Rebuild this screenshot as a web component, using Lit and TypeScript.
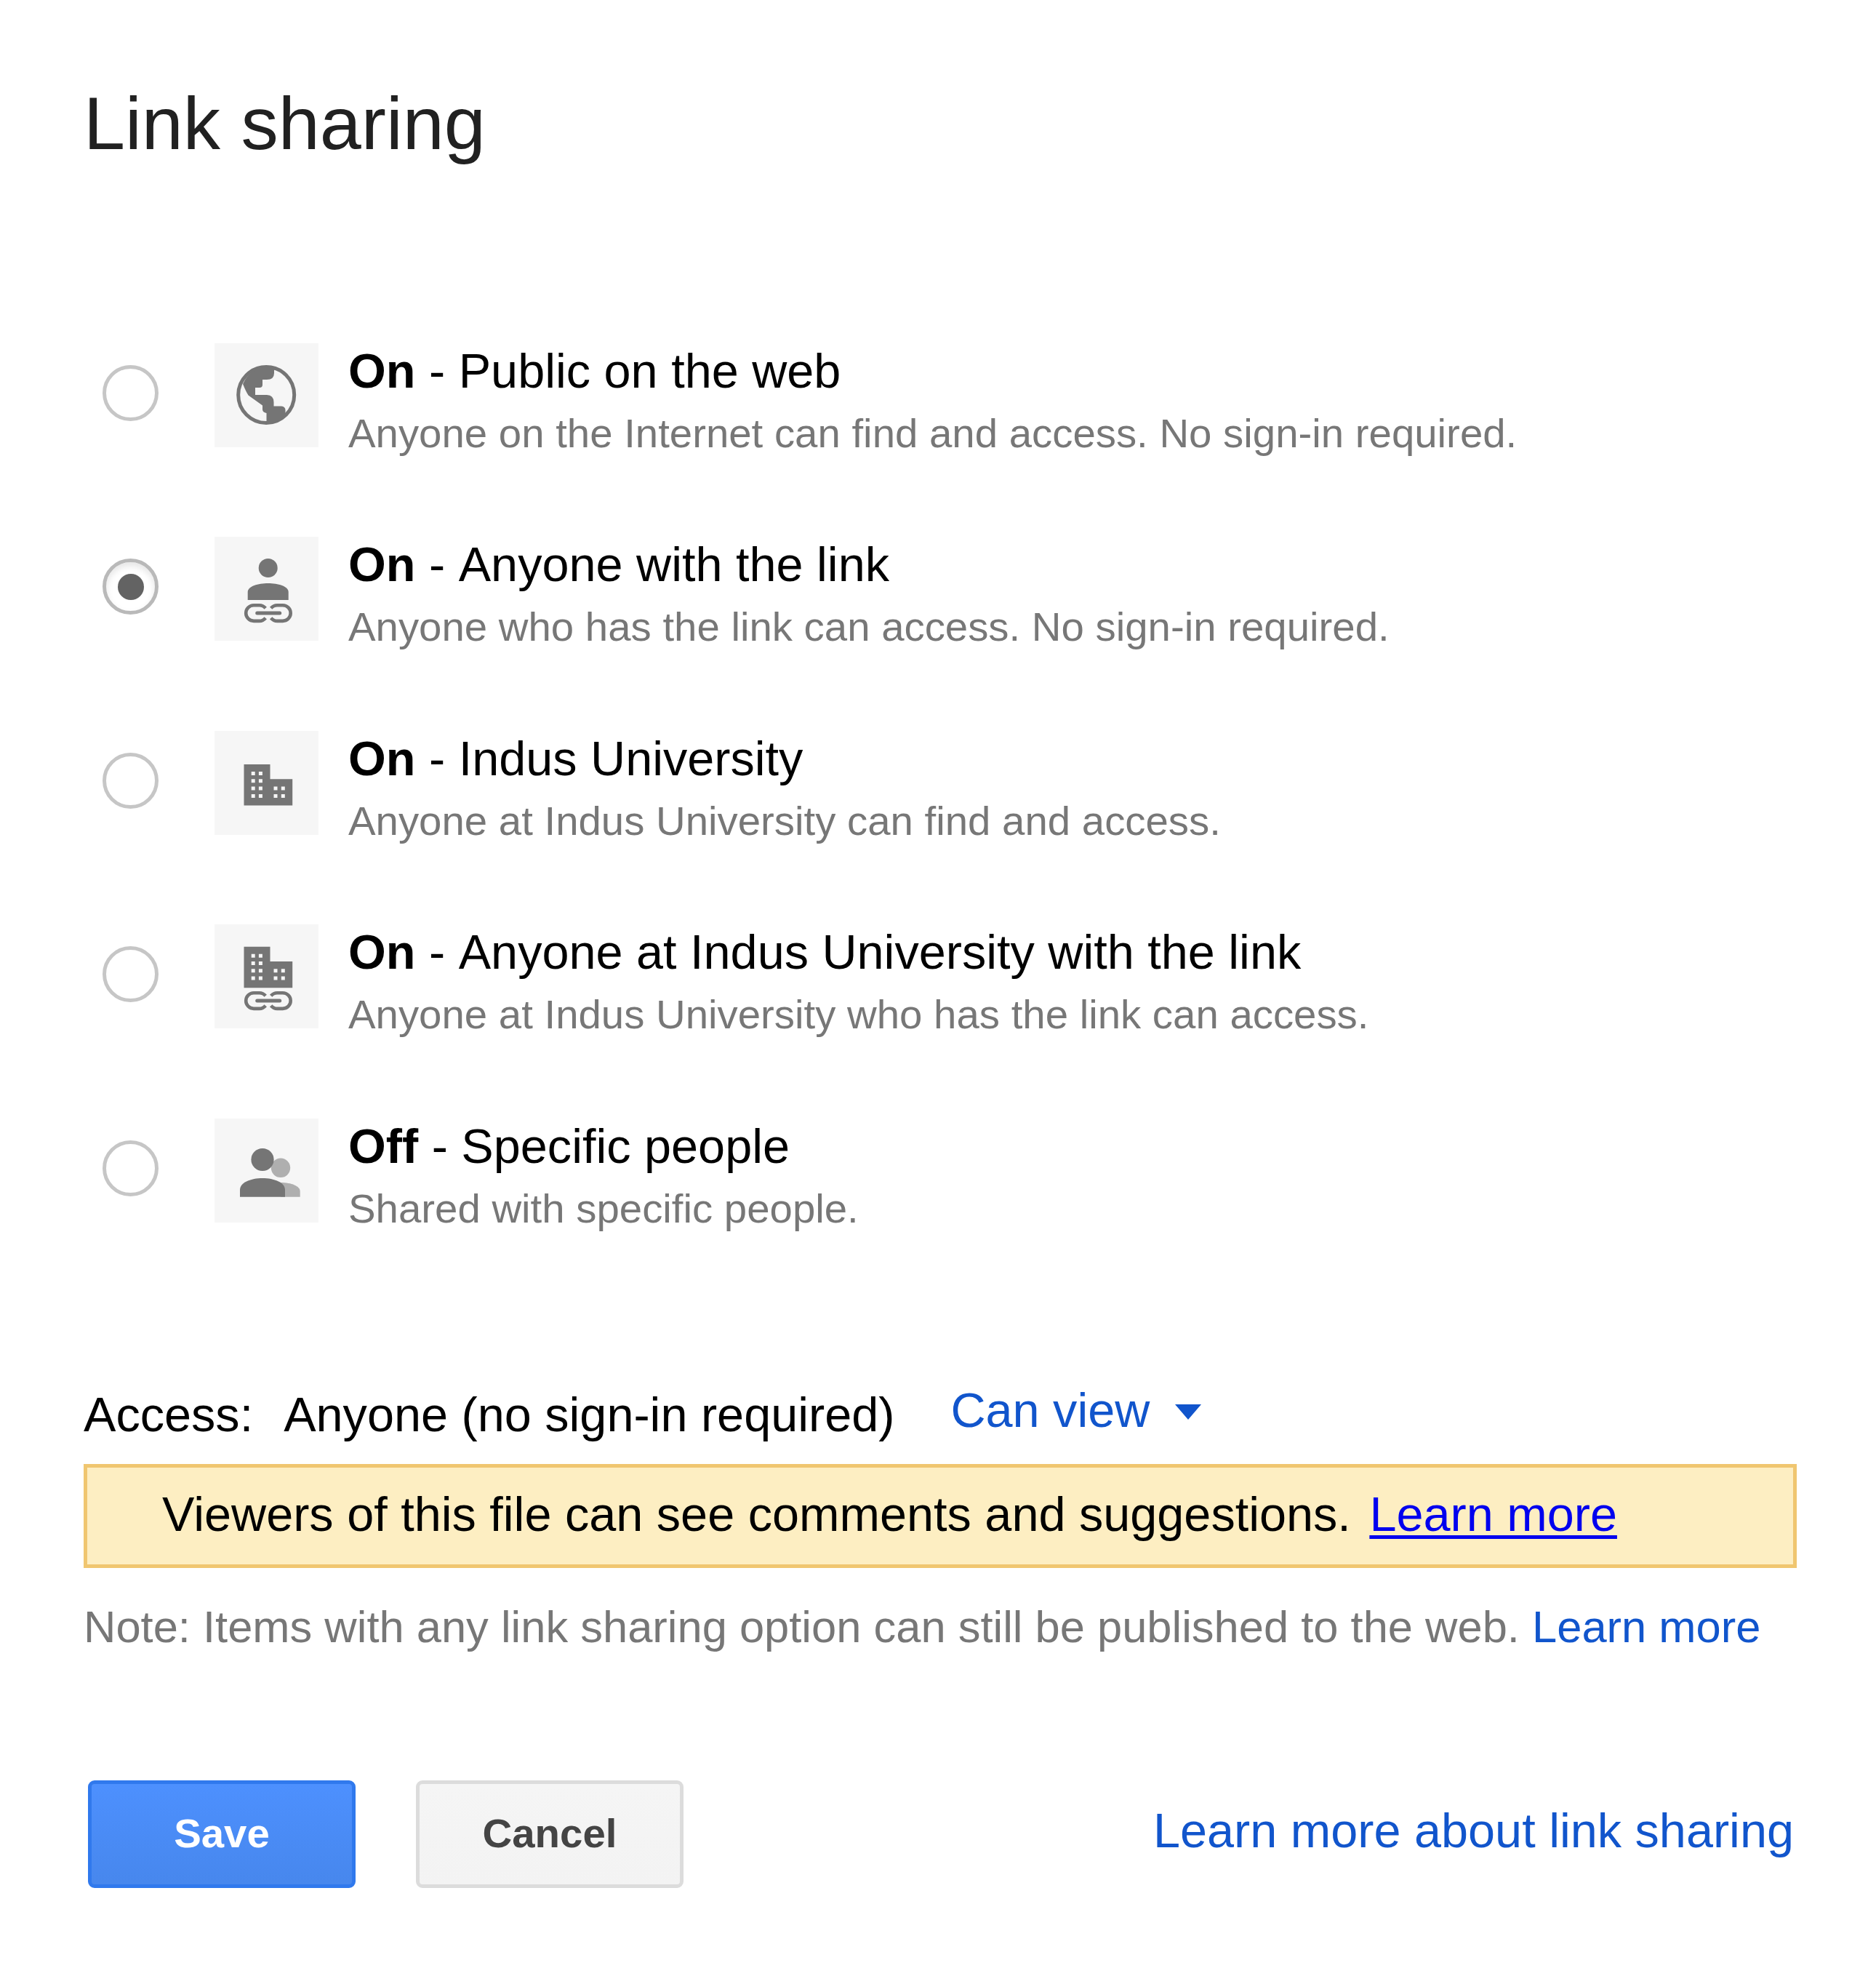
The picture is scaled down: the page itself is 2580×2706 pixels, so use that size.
import { LitElement, html, css, svg } from "lit";
import { customElement, property, state } from "lit/decorators.js";

type IconName = "globe" | "person-link" | "building" | "building-link" | "people";

interface SharingOption {
  icon: IconName;
  mode: string;
  label: string;
  detail: string;
}

const OPTIONS: SharingOption[] = [
  { icon: "globe", mode: "On", label: "Public on the web", detail: "Anyone on the Internet can find and access. No sign-in required." },
  { icon: "person-link", mode: "On", label: "Anyone with the link", detail: "Anyone who has the link can access. No sign-in required." },
  { icon: "building", mode: "On", label: "Indus University", detail: "Anyone at Indus University can find and access." },
  { icon: "building-link", mode: "On", label: "Anyone at Indus University with the link", detail: "Anyone at Indus University who has the link can access." },
  { icon: "people", mode: "Off", label: "Specific people", detail: "Shared with specific people." },
];

const chain = svg`
  <g fill="none" stroke="#757575" stroke-width="4.6">
    <path d="M70.200 98.300 Q66.700 94.300 61.700 94.300 H54 A10.800 10.800 0 0 0 54 115.900 H61.700 Q66.700 115.900 70.200 111.700"/>
    <path d="M77.700 98.300 Q81.200 94.300 86.200 94.300 H93.900 A10.800 10.800 0 0 1 93.900 115.900 H86.200 Q81.200 115.900 77.700 111.700"/>
    <path d="M58.700 105 H89.700" stroke-width="5" stroke-linecap="round"/>
  </g>`;

const building = svg`
  <path fill="#757575" d="M40.500 46 H76.500 V66.300 H107.200 V102.500 H40.500 Z"/>
  <path fill="#f6f6f6" d="M50.700 56h5v5h-5zM60.900 56h5v5h-5zM50.700 66.300h5v5h-5zM60.900 66.300h5v5h-5zM50.700 76.600h5v5h-5zM60.900 76.600h5v5h-5zM50.700 86.900h5v5h-5zM60.900 86.900h5v5h-5zM81.500 76.600h5v5h-5zM91.800 76.600h5v5h-5zM81.500 86.900h5v5h-5zM91.800 86.900h5v5h-5z"/>`;

const ICONS = {
  globe: svg`
    <circle cx="71.200" cy="71" r="38.500" fill="none" stroke="#757575" stroke-width="5"/>
    <path fill="#757575" d="M82 32 V41 Q82 50 72 50 H66 V57 Q66 61 62 61 H56 V71 H72 Q81.500 71.500 81.500 81 V86.500 H92 Q97.500 87 97.500 92 V99 A40 40 0 0 1 71.500 111 V96 Q66 95 66 91 V85.500 L46.500 71.500 Q43 66 39 56 A40 40 0 0 1 82 32 Z"/>`,
  "person-link": svg`
    <circle cx="73.700" cy="43" r="13" fill="#757575"/>
    <path fill="#757575" d="M45.700 87 V76 C45.700 68 60 64 73.700 64 S101.700 68 101.700 76 V87 Z"/>
    ${chain}`,
  building,
  "building-link": svg`<g transform="translate(0 -15.300)">${building}</g>${chain}`,
  people: svg`
    <circle cx="91" cy="67.800" r="13.200" fill="#afafaf"/>
    <path fill="#afafaf" d="M91 88 C106 88 117.700 93 117.700 100 V107.700 H91 Z"/>
    <circle cx="66" cy="56.500" r="15.600" fill="#757575"/>
    <path fill="#757575" d="M35 107.700 V98 C35 88 50 82 66 82 S97 88 97 98 V107.700 Z"/>`,
};

@customElement("sharing-option")
export class SharingOptionRow extends LitElement {
  @property({ attribute: false }) option!: SharingOption;
  @property({ type: Boolean }) selected = false;

  static styles = css`
    :host { display: block; height: 143px; font-family: "Liberation Sans", Arial, sans-serif; }
    .row { display: flex; cursor: pointer; height: 143px; }
    .radio {
      box-sizing: border-box; width: 77px; height: 77px; margin: 30px 77px 0 0; flex: none;
      border: 5px solid #c6c6c6; border-radius: 50%;
      display: flex; align-items: center; justify-content: center;
    }
    .radio.on { border-color: #b9b9b9; box-shadow: inset 0 5px 10px rgba(0, 0, 0, 0.1); }
    .dot { width: 36px; height: 36px; border-radius: 50%; background: #636363; }
    .tile { width: 143px; height: 143px; flex: none; background: #f6f6f6; display: block; }
    .text { margin-left: 41px; white-space: nowrap; }
    .name { display: flex; white-space: pre; font-size: 66.600px; line-height: 76px; color: #000; }
    .detail { font-size: 56.360px; line-height: 64px; margin-top: 16px; color: #777; }
  `;

  render() {
    const o = this.option;
    return html`
      <div class="row">
        <div class="radio ${this.selected ? "on" : ""}">${this.selected ? html`<div class="dot"></div>` : ""}</div>
        <svg class="tile" viewBox="0 0 143 143">${ICONS[o.icon]}</svg>
        <div class="text">
          <div class="name"><b>${o.mode}</b><span> - </span><span>${o.label}</span></div>
          <div class="detail">${o.detail}</div>
        </div>
      </div>`;
  }
}

@customElement("app-root")
export class AppRoot extends LitElement {
  @state() private selected = 1;

  static styles = css`
    :host {
      display: block; box-sizing: border-box; width: 2580px; height: 2706px; background: #fff; color: #000;
      font-family: "Liberation Sans", Arial, sans-serif; padding: 111px 109px 0 115px; overflow: hidden;
    }
    .title { margin: 0; font-size: 102.500px; line-height: 118px; font-weight: 400; color: #212121; }
    .options { margin: 243px 0 0 26px; display: flex; flex-direction: column; gap: 123.400px; }
    .access { display: flex; height: 78px; margin-top: 225.400px; font-size: 66.600px; line-height: 78px; white-space: nowrap; }
    .who { margin-left: 42px; }
    .role { display: flex; margin: -6px 0 0 77px; color: #1155cc; }
    .arrow { width: 36px; height: 21px; margin: 31px 0 0 35px; }
    .notice {
      box-sizing: border-box; width: 2356px; height: 143px; margin-top: 29px; padding-left: 103px;
      border: 5px solid #f0c670; background: #fdeec2; font-size: 66.600px; line-height: 129px; white-space: nowrap;
    }
    .notice a { color: #0000ee; margin-left: 7px; text-decoration: underline; text-decoration-thickness: 5px; text-underline-offset: 6px; }
    .note { margin-top: 46px; font-size: 61.480px; line-height: 70px; color: #777; white-space: nowrap; }
    .note a, .more { color: #1155cc; text-decoration: none; }
    .footer { display: flex; height: 148px; margin: 176px 0 0 6px; }
    button {
      box-sizing: border-box; width: 368px; height: 148px; padding: 0; margin: 0 83px 0 0; border-radius: 9px;
      font: bold 56.360px/136px "Liberation Sans", Arial, sans-serif;
    }
    .save { border: 5px solid #3079ed; color: #fff; background: linear-gradient(#4d90fe, #4787ed); }
    .cancel { border: 5px solid #dcdcdc; color: #444; background: linear-gradient(#f5f5f5, #f3f3f3); }
    .save, .cancel { display: flex; align-items: flex-start; justify-content: center; }
    .more { margin: 30px 4px 0 auto; font-size: 66.600px; line-height: 78px; white-space: nowrap; }
  `;

  render() {
    return html`
      <h1 class="title">Link sharing</h1>
      <div class="options">
        ${OPTIONS.map((o, i) => html`<sharing-option .option=${o} ?selected=${i === this.selected} @click=${() => (this.selected = i)}></sharing-option>`)}
      </div>
      <div class="access">
        <span>Access:</span><span class="who">Anyone (no sign-in required)</span>
        <span class="role">Can view<svg class="arrow" viewBox="0 0 36 21"><path fill="#1155cc" d="M0 0H36L18 21Z"/></svg></span>
      </div>
      <div class="notice">Viewers of this file can see comments and suggestions. <a>Learn more</a></div>
      <div class="note">Note: Items with any link sharing option can still be published to the web. <a>Learn more</a></div>
      <div class="footer">
        <button class="save">Save</button><button class="cancel">Cancel</button>
        <a class="more">Learn more about link sharing</a>
      </div>`;
  }
}
